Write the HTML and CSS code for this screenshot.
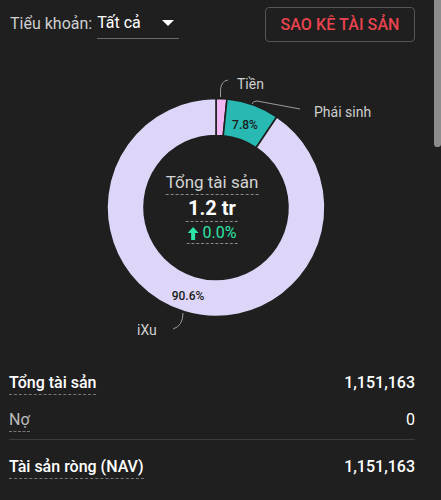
FILE: index.html
```html
<!DOCTYPE html>
<html lang="vi">
<head>
<meta charset="utf-8">
<link rel="stylesheet" href="styles.css">
</head>
<body>
<div class="page">
  <div class="header">
    <div class="account">
      <span class="account-label">Tiểu khoản:</span>
      <div class="select">
        <span class="select-value">Tất cả</span>
        <svg class="caret" width="12" height="6" viewBox="0 0 12 6"><path d="M0 0 L12 0 L6 6 Z" fill="#fff"/></svg>
      </div>
    </div>
    <button class="statement-btn">SAO KÊ TÀI SẢN</button>
  </div>

  <div class="chart">
    <svg class="donut" width="441" height="300" viewBox="0 0 441 300">
      <path d="M216 48.5 A109 109 0 0 1 226.94 49.06 L223.23 85.87 A72 72 0 0 0 216 85.5 Z" fill="#f1b7f3" stroke="#1f1f1f" stroke-width="1.6"/>
      <path d="M226.94 49.06 A109 109 0 0 1 276.70 66.96 L256.10 97.70 A72 72 0 0 0 223.23 85.87 Z" fill="#27b9b2" stroke="#1f1f1f" stroke-width="1.6"/>
      <path d="M276.70 66.96 A109 109 0 1 1 216 48.5 L216 85.5 A72 72 0 1 0 256.10 97.70 Z" fill="#ddd6f8" stroke="#1f1f1f" stroke-width="1.6"/>
      <path d="M220.5 47 L220.5 40 Q221 31 228 30" fill="none" stroke="#9a9a9a" stroke-width="1"/>
      <path d="M252 54 Q253 51 257 51 L300 59" fill="none" stroke="#9a9a9a" stroke-width="1"/>
      <path d="M183 263 Q183 276 173 279" fill="none" stroke="#9a9a9a" stroke-width="1"/>
      <text class="lbl" x="237" y="39">Tiền</text>
      <text class="lbl" x="314" y="67">Phái sinh</text>
      <text class="lbl" x="137" y="285">iXu</text>
      <text class="pct" x="245" y="79" text-anchor="middle">7.8%</text>
      <text class="pct" x="188" y="250" text-anchor="middle">90.6%</text>
    </svg>
    <div class="center">
      <span class="c-title">Tổng tài sản</span>
      <span class="c-value">1.2 tr</span>
      <span class="c-change"><svg width="11" height="13" viewBox="0 0 11 13"><path d="M5.5 0 L11 6 L7.5 6 L7.5 13 L3.5 13 L3.5 6 L0 6 Z" fill="#2ee3a6"/></svg>0.0%</span>
    </div>
  </div>

  <div class="summary">
    <div class="row strong"><span class="name">Tổng tài sản</span><span class="val">1,151,163</span></div>
    <div class="row short"><span class="name muted">Nợ</span><span class="val">0</span></div>
    <div class="row strong divided"><span class="name">Tài sản ròng (NAV)</span><span class="val">1,151,163</span></div>
  </div>
</div>
<div class="scroll-thumb"></div>
</body>
</html>
```

FILE: styles.css
```css
html, body {
  margin: 0;
  padding: 0;
  background: #1f1f1f;
  font-family: Roboto, "Noto Sans", "Liberation Sans", sans-serif;
  color: #fff;
}
.page {
  width: 441px;
  height: 500px;
  overflow: hidden;
}
.header {
  display: flex;
  justify-content: space-between;
  align-items: flex-start;
  padding: 7px 26px 0 10px;
  height: 43px;
}
.account {
  display: flex;
  align-items: center;
  height: 32px;
  font-size: 16px;
}
.account-label {
  color: #cfcfcf;
  margin-right: 5px;
}
.select {
  display: flex;
  align-items: center;
  width: 82px;
  height: 31px;
  border-bottom: 1px solid #6a6a6a;
  box-sizing: border-box;
}
.select-value {
  color: #fff;
  flex: 1;
}
.caret {
  margin-right: 5px;
}
.statement-btn {
  width: 150px;
  height: 35px;
  background: transparent;
  border: 1px solid #555;
  border-radius: 4px;
  color: #e9434e;
  font-family: Roboto, "Noto Sans", sans-serif;
  font-size: 16px;
  font-weight: 500;
  padding: 0;
  letter-spacing: 0.1px;
}
.chart {
  position: relative;
  height: 323px;
}
.donut {
  display: block;
}
.lbl {
  font-size: 14px;
  fill: #d0d0d0;
  font-family: Roboto, sans-serif;
}
.pct {
  font-size: 12px;
  font-weight: 500;
  fill: #1a1a1a;
  font-family: Roboto, sans-serif;
}
.center {
  position: absolute;
  left: 212px;
  top: 122px;
  transform: translateX(-50%);
  display: flex;
  flex-direction: column;
  align-items: center;
}
.center span {
  border-bottom: 1px dashed #8a8a8a;
  white-space: nowrap;
}
.c-title {
  font-size: 17px;
  color: #d4d4d4;
  line-height: 21px;
  padding-bottom: 1px;
}
.c-value {
  font-size: 20px;
  font-weight: 700;
  line-height: 22px;
  margin-top: 2px;
  padding: 0 2px 2px;
}
.c-change {
  font-size: 16px;
  color: #2ee3a6;
  line-height: 18px;
  margin-top: 2px;
  padding: 0 1px 1px;
  display: flex;
  align-items: center;
  gap: 4px;
}
.summary {
  padding: 0 26px 0 9px;
}
.row {
  display: flex;
  justify-content: space-between;
  align-items: flex-start;
  font-size: 16px;
  height: 37px;
}
.row.short {
  height: 29px;
}
.row .name {
  border-bottom: 1px dashed #777;
  line-height: 20px;
  padding-bottom: 1px;
}
.row .val {
  line-height: 20px;
}
.strong .name, .strong .val {
  font-weight: 500;
}
.muted {
  color: #bdbdbd;
}
.divided {
  border-top: 1px solid #3b3b3b;
  padding-top: 17px;
}
.scroll-thumb {
  position: absolute;
  top: 0;
  left: 434px;
  width: 7px;
  height: 147px;
  background: #8c8c8c;
  border-radius: 0 0 3px 3px;
}
```
